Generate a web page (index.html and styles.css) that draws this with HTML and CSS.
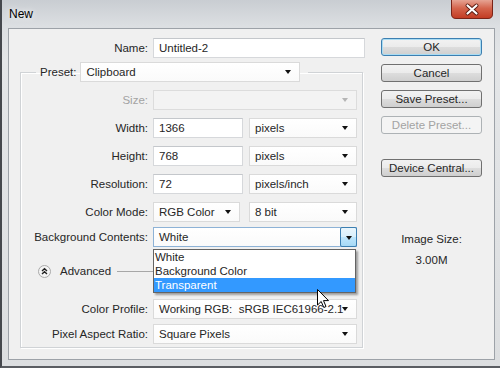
FILE: index.html
```html
<!DOCTYPE html>
<html lang="en">
<head>
    <meta charset="UTF-8">
    <title>New</title>
    <link rel="stylesheet" href="styles.css">
</head>
<body>
    <div class="window">
        <div class="titlebar">
            <span class="title">New</span>
            <div class="close">
                <svg width="42" height="19" viewBox="0 0 42 19">
                    <defs>
                        <linearGradient id="cg" x1="0" y1="0" x2="0" y2="1">
                            <stop offset="0" stop-color="#e6a393"/>
                            <stop offset="0.45" stop-color="#d4644c"/>
                            <stop offset="1" stop-color="#c23a22"/>
                        </linearGradient>
                    </defs>
                    <path d="M0.5 0 V14 Q0.5 18.5 5 18.5 H37 Q41.5 18.5 41.5 14 V0" fill="url(#cg)" stroke="#7a2418"/>
                    <path d="M16.5 5.5 L25.5 13.5 M25.5 5.5 L16.5 13.5" stroke="#5a1a10" stroke-width="4" stroke-linecap="round"/>
                    <path d="M16.5 5.5 L25.5 13.5 M25.5 5.5 L16.5 13.5" stroke="#fff" stroke-width="2.2" stroke-linecap="round"/>
                </svg>
            </div>
        </div>
        <div class="dialog">
            <div class="form">
                <div class="row name-row">
                    <span class="lbl">Name:</span>
                    <div class="field name-field">Untitled-2</div>
                </div>
                <fieldset class="group">
                    <legend class="preset">
                        <span>Preset:</span>
                        <div class="select preset-select">Clipboard<span class="arrow"></span></div>
                    </legend>
                    <div class="row">
                        <span class="lbl off">Size:</span>
                        <div class="select full disabled"><span class="arrow"></span></div>
                    </div>
                    <div class="row">
                        <span class="lbl">Width:</span>
                        <div class="field short">1366</div>
                        <div class="select unit">pixels<span class="arrow"></span></div>
                    </div>
                    <div class="row">
                        <span class="lbl">Height:</span>
                        <div class="field short">768</div>
                        <div class="select unit">pixels<span class="arrow"></span></div>
                    </div>
                    <div class="row">
                        <span class="lbl">Resolution:</span>
                        <div class="field short">72</div>
                        <div class="select unit">pixels/inch<span class="arrow"></span></div>
                    </div>
                    <div class="row">
                        <span class="lbl">Color Mode:</span>
                        <div class="select mode">RGB Color<span class="arrow"></span></div>
                        <div class="select unit">8 bit<span class="arrow"></span></div>
                    </div>
                    <div class="row tight">
                        <span class="lbl">Background Contents:</span>
                        <div class="select full focused">White
                            <span class="drop-btn"><span class="arrow"></span></span>
                            <ul class="list">
                                <li>White</li>
                                <li>Background Color</li>
                                <li class="hl">Transparent</li>
                            </ul>
                        </div>
                    </div>
                    <div class="row advanced">
                        <span class="adv-icon">
                            <svg width="13" height="13" viewBox="0 0 13 13">
                                <circle cx="6.5" cy="6.5" r="6" fill="#f4f4f4" stroke="#a9a9a9"/>
                                <path d="M4 6 L6.5 3.8 L9 6 M4 9 L6.5 6.8 L9 9" fill="none" stroke="#222" stroke-width="1.4"/>
                            </svg>
                        </span>
                        <span class="adv-text">Advanced</span>
                        <span class="adv-line"></span>
                    </div>
                    <div class="row gap-lg">
                        <span class="lbl">Color Profile:</span>
                        <div class="select full">Working RGB:&nbsp; sRGB IEC61966-2.1<span class="arrow"></span></div>
                    </div>
                    <div class="row tight">
                        <span class="lbl">Pixel Aspect Ratio:</span>
                        <div class="select full">Square Pixels<span class="arrow"></span></div>
                    </div>
                </fieldset>
            </div>
            <div class="side">
                <div class="btn default">OK</div>
                <div class="btn">Cancel</div>
                <div class="btn">Save Preset...</div>
                <div class="btn disabled">Delete Preset...</div>
                <div class="btn far">Device Central...</div>
                <div class="img-size">
                    <div>Image Size:</div>
                    <div class="img-value">3.00M</div>
                </div>
            </div>
        </div>
        <svg class="cursor" width="13" height="20" viewBox="0 0 13 20">
            <path d="M0.5 0.5 V16 L4.2 12.5 L6.8 18.5 L9 17.5 L6.5 11.6 L11.5 11.6 Z" fill="#fff" stroke="#000"/>
        </svg>
    </div>
</body>
</html>
```

FILE: styles.css
```css
body {
    margin: 0;
    font: 11.5px "Liberation Sans", Arial, sans-serif;
    color: #262626;
}
.window {
    position: relative;
    width: 500px;
    height: 368px;
    box-sizing: border-box;
    border-left: 2px solid #45484d;
    border-bottom: 2px solid #5a5d62;
    background: linear-gradient(#c9cdd2, #dcdfe2 26px, #e4e6e8 60px, #dcdee0);
    display: flex;
    flex-direction: column;
    overflow: hidden;
}
.titlebar {
    height: 28px;
    padding-left: 7px;
    flex: none;
}
.title {
    font-size: 12px;
    line-height: 28px;
    color: #000;
    text-shadow: 0 0 6px #fff;
}
.close {
    position: absolute;
    top: 0;
    right: 7px;
    height: 19px;
}
.close svg {
    display: block;
}
.dialog {
    flex: 1;
    margin: 0 5px 6px 6px;
    border: 1px solid #9da2a8;
    background: #f0f0f0;
    display: flex;
}
.form {
    width: 360px;
    flex: none;
}
.row {
    display: flex;
    align-items: center;
    height: 20px;
    margin-top: 8px;
}
.row.tight {
    margin-top: 5px;
}
.row.gap-lg {
    margin-top: 18px;
}
.lbl {
    width: 127px;
    margin-right: 5px;
    text-align: right;
    white-space: nowrap;
}
.lbl.off {
    color: #a3a3a3;
}
.name-row {
    margin-top: 9px;
}
.name-row .lbl {
    width: 139px;
}
.field, .select {
    position: relative;
    box-sizing: border-box;
    height: 20px;
    line-height: 18px;
    padding-left: 5px;
    background: #fff;
    white-space: nowrap;
}
.field {
    border: 1px solid #d6d8db;
    border-top-color: #c4c7cb;
}
.select {
    border: 1px solid #dadada;
    background: linear-gradient(#fff, #fafafa);
}
.arrow {
    position: absolute;
    right: 8px;
    top: 7px;
    border-left: 3.5px solid transparent;
    border-right: 3.5px solid transparent;
    border-top: 4px solid #111;
}
.name-field {
    width: 212px;
}
.group {
    margin: 4px 0 0 11px;
    padding: 0 0 3px;
    width: 341px;
    border: 1px solid #d0d3d6;
    box-shadow: inset 1px 1px 0 #fff, 1px 1px 0 #fff;
}
.preset {
    margin-left: 15px;
    padding: 0 8px 0 4px;
    display: flex;
    align-items: center;
    gap: 4px;
}
.preset-select {
    width: 220px;
}
.full {
    width: 204px;
}
.short {
    width: 90px;
    margin-right: 6px;
}
.unit {
    width: 108px;
}
.mode {
    width: 87px;
    margin-right: 9px;
}
.select.disabled {
    background: #f3f3f3;
    border-color: #dcdcdc;
}
.select.disabled .arrow {
    border-top-color: #b5b5b5;
}
.select.focused {
    border-color: #8db2d6;
}
.drop-btn {
    position: absolute;
    top: -1px;
    right: -1px;
    width: 17px;
    height: 20px;
    box-sizing: border-box;
    border: 1px solid #3c7fb1;
    border-radius: 2px;
    background: linear-gradient(#eaf6fd, #d9f0fc 50%, #bee6fd 51%, #a7d9f5);
}
.drop-btn .arrow {
    right: 4px;
    top: 8px;
}
.list {
    position: absolute;
    left: -1px;
    top: 21px;
    width: 201px;
    margin: 0;
    padding: 0;
    list-style: none;
    border: 1px solid #646464;
    background: #fff;
    box-shadow: 2px 2px 2px rgba(0, 0, 0, 0.35);
    z-index: 2;
}
.list li {
    height: 14px;
    line-height: 14px;
    padding-left: 1px;
}
.list li.hl {
    background: #3399ff;
    color: #fff;
}
.advanced {
    margin-top: 14px;
}
.adv-icon {
    margin-left: 17px;
    height: 13px;
}
.adv-icon svg {
    display: block;
}
.adv-text {
    margin-left: 9px;
}
.adv-line {
    flex: 1;
    height: 1px;
    margin: 0 10px 0 6px;
    background: #a7a7a7;
}
.side {
    flex: 1;
    padding: 9px 0 0 12px;
}
.btn {
    box-sizing: border-box;
    width: 101px;
    height: 18px;
    line-height: 16px;
    margin-bottom: 8px;
    text-align: center;
    border: 1px solid #707070;
    border-radius: 3px;
    background: linear-gradient(#f2f2f2, #ebebeb 50%, #dddddd 51%, #cfcfcf);
    white-space: nowrap;
}
.btn.default {
    border-color: #3c7fb1;
    box-shadow: inset 0 0 0 1px #a9dcf3;
}
.btn.disabled {
    border-color: #adb2b5;
    background: #f4f4f4;
    color: #a3a3a3;
    margin-top: 1px;
}
.btn.far {
    margin-top: 25px;
}
.img-size {
    width: 101px;
    margin-top: 56px;
    text-align: center;
}
.img-value {
    margin-top: 9px;
}
.cursor {
    position: absolute;
    left: 315px;
    top: 289px;
    z-index: 3;
}
```
